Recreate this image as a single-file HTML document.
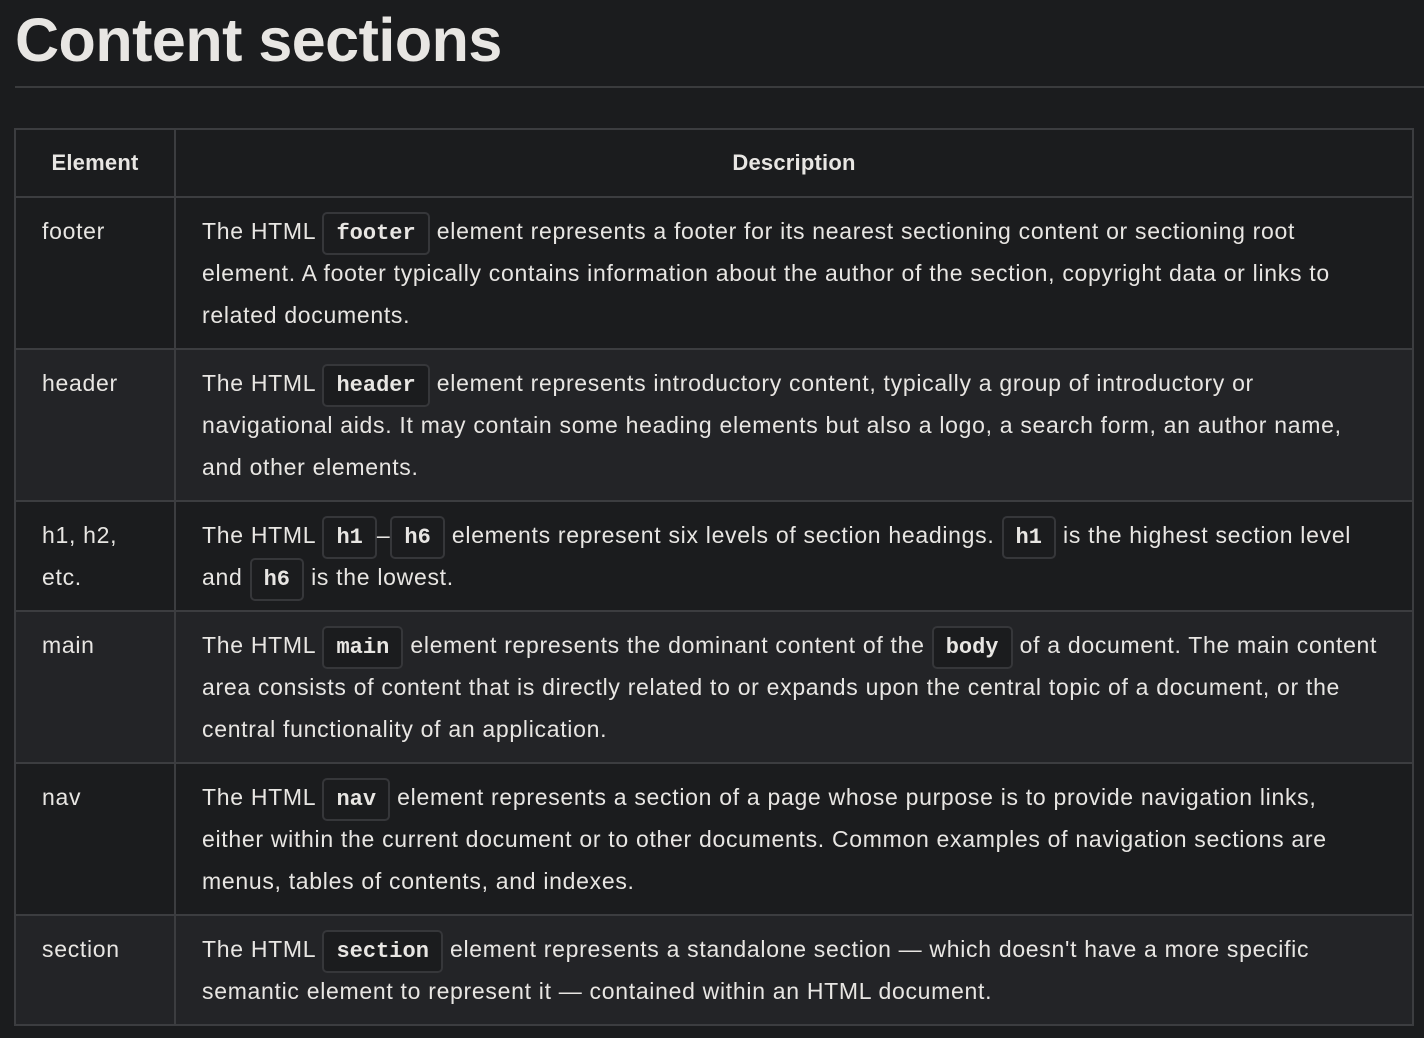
<!DOCTYPE html>
<html><head><meta charset="utf-8"><style>
html,body{margin:0;padding:0;background:#1b1c1e;width:1424px;height:1038px;overflow:hidden}
body{font-family:"Liberation Sans",Arial,sans-serif;color:#e8e6e3}
h1{position:absolute;left:15px;top:4px;margin:0;font-size:61px;font-weight:bold;line-height:72px;color:#e8e6e3;letter-spacing:-0.5px}
.hr{position:absolute;left:15px;right:0;top:86px;height:2px;background:#3a3b3d}
table{position:absolute;left:14px;top:128px;width:1400px;border-collapse:collapse;font-size:23px;line-height:42px;letter-spacing:0.7px}
td,th{border:2px solid #3c3d40;padding:12px 26px 12px 26px;vertical-align:top;text-align:left;white-space:nowrap}
th{text-align:center;font-weight:bold;padding:12px 26px;font-size:22px;letter-spacing:0.2px}
td:first-child,th:first-child{width:106px}
tr:nth-child(odd) td{background:#232427}
tr:nth-child(even) td{background:#1b1c1e}
th{background:#1b1c1e}
code{font-family:"Liberation Mono",monospace;font-weight:bold;font-size:22px;line-height:0;letter-spacing:0;border:2px solid #36373a;border-radius:5px;padding:7px 12px 7px;background:#1b1c1e}
</style></head><body>
<h1>Content sections</h1>
<div class="hr"></div>
<table>
<tr><th>Element</th><th>Description</th></tr>
<tr><td>footer</td><td>The HTML <code>footer</code> element represents a footer for its nearest sectioning content or sectioning root<br>element. A footer typically contains information about the author of the section, copyright data or links to<br>related documents.</td></tr>
<tr><td>header</td><td>The HTML <code>header</code> element represents introductory content, typically a group of introductory or<br>navigational aids. It may contain some heading elements but also a logo, a search form, an author name,<br>and other elements.</td></tr>
<tr><td>h1, h2,<br>etc.</td><td>The HTML <code>h1</code>–<code>h6</code> elements represent six levels of section headings. <code>h1</code> is the highest section level<br>and <code>h6</code> is the lowest.</td></tr>
<tr><td>main</td><td>The HTML <code>main</code> element represents the dominant content of the <code>body</code> of a document. The main content<br>area consists of content that is directly related to or expands upon the central topic of a document, or the<br>central functionality of an application.</td></tr>
<tr><td>nav</td><td>The HTML <code>nav</code> element represents a section of a page whose purpose is to provide navigation links,<br>either within the current document or to other documents. Common examples of navigation sections are<br>menus, tables of contents, and indexes.</td></tr>
<tr><td>section</td><td>The HTML <code>section</code> element represents a standalone section — which doesn't have a more specific<br>semantic element to represent it — contained within an HTML document.</td></tr>
</table>
</body></html>
